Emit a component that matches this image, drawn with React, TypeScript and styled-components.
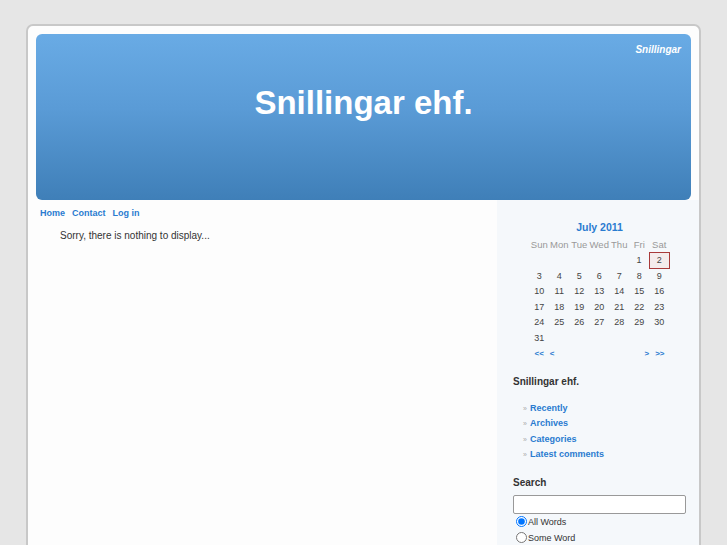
import * as React from 'react'
import styled, { createGlobalStyle } from 'styled-components'

const GlobalStyle = createGlobalStyle`
  html, body {
    margin: 0;
    background: #e6e6e6;
    font-family: 'Liberation Sans', Arial, sans-serif;
  }
`

const Page = styled.div`
  padding-top: 24px;
  height: 521px;
  overflow: hidden;
`

const Container = styled.div`
  width: 671px;
  margin: 0 auto;
  border: 2px solid #c8c8c8;
  border-radius: 7px;
  background: #fdfdfd;
  padding-top: 8px;
  min-height: 600px;
  box-sizing: content-box;
`

const Header = styled.header`
  position: relative;
  margin: 0 8px;
  height: 166px;
  border-radius: 6px;
  background: linear-gradient(to bottom, #69abe5 0%, #5a9bd6 45%, #3f7fb8 100%);
  display: flex;
  align-items: flex-start;
  justify-content: center;
  box-sizing: border-box;
  padding-top: 50px;
`

const Title = styled.h1`
  margin: 0;
  color: #fff;
  font-size: 33px;
  line-height: 38px;
  font-weight: bold;
`

const Tagline = styled.div`
  position: absolute;
  top: 10px;
  right: 10px;
  color: #fff;
  font-size: 10px;
  font-weight: bold;
  font-style: italic;
`

const Body = styled.div`
  display: flex;
`

const Main = styled.main`
  flex: 1;
  padding: 8px 12px 0;
`

const Nav = styled.nav`
  display: flex;
  gap: 7px;
  font-size: 9px;
  font-weight: bold;
  line-height: 11px;
`

const Link = styled.a`
  color: #2a7bd0;
  text-decoration: none;
`

const Message = styled.p`
  margin: 11px 0 0 20px;
  font-size: 10px;
  color: #333;
`

const Sidebar = styled.aside`
  width: 202px;
  box-sizing: border-box;
  min-height: 400px;
  background: #f5f8fb;
  padding: 21px 13px 0 16px;
`

const Calendar = styled.table`
  margin: 0 auto;
  border-collapse: collapse;
  font-size: 9px;
  color: #444;
`

const Caption = styled.caption`
  font-size: 10.5px;
  font-weight: bold;
  color: #2a7bd0;
  padding-bottom: 3px;
`

const DayHead = styled.th`
  width: 20px;
  height: 16px;
  padding: 0;
  font-size: 9.5px;
  font-weight: normal;
  color: #999;
  text-align: center;
`

const Day = styled.td<{ $today?: boolean }>`
  width: 20px;
  height: 15.5px;
  padding: 0;
  text-align: center;
  box-sizing: border-box;
  ${(p) => p.$today && `border: 1px solid #a83a3a; background: #f4ecec;`}
`

const CalNav = styled.div`
  display: flex;
  justify-content: space-between;
  width: 130px;
  margin: 3px auto 0;
  font-size: 8px;
  font-weight: bold;
`

const NavGroup = styled.span`
  display: flex;
  gap: 6px;
`

const SectionTitle = styled.h3<{ $gap: number }>`
  margin: ${(p) => p.$gap}px 0 0;
  font-size: 10px;
  font-weight: bold;
  color: #333;
`

const List = styled.ul`
  list-style: none;
  margin: 14px 0 0;
  padding: 0 0 0 10px;
`

const Item = styled.li`
  font-size: 9px;
  font-weight: bold;
  line-height: 15.5px;
  &::before {
    content: '»';
    color: #aaa;
    font-size: 7px;
    font-weight: normal;
    margin-right: 3px;
  }
`

const SearchBox = styled.input`
  display: block;
  width: 173px;
  height: 19px;
  margin-top: 7px;
  box-sizing: border-box;
  border: 1px solid #999;
  border-radius: 2px;
  background: #fff;
`

const RadioRow = styled.label`
  display: flex;
  align-items: center;
  gap: 1px;
  height: 16px;
  font-size: 9px;
  color: #333;
  input {
    margin: 0 0 0 3px;
    width: 11px;
    height: 11px;
  }
`

const weeks: (number | null)[][] = [
  [null, null, null, null, null, 1, 2],
  [3, 4, 5, 6, 7, 8, 9],
  [10, 11, 12, 13, 14, 15, 16],
  [17, 18, 19, 20, 21, 22, 23],
  [24, 25, 26, 27, 28, 29, 30],
  [31, null, null, null, null, null, null],
]

const days = ['Sun', 'Mon', 'Tue', 'Wed', 'Thu', 'Fri', 'Sat']

const App = () => {
  return (
    <Page>
      <GlobalStyle />
      <Container>
        <Header>
          <Tagline>Snillingar</Tagline>
          <Title>Snillingar ehf.</Title>
        </Header>
        <Body>
          <Main>
            <Nav>
              <Link href="#">Home</Link>
              <Link href="#">Contact</Link>
              <Link href="#">Log in</Link>
            </Nav>
            <Message>Sorry, there is nothing to display...</Message>
          </Main>
          <Sidebar>
            <Calendar>
              <Caption>July 2011</Caption>
              <thead>
                <tr>
                  {days.map((d) => (
                    <DayHead key={d}>{d}</DayHead>
                  ))}
                </tr>
              </thead>
              <tbody>
                {weeks.map((w, i) => (
                  <tr key={i}>
                    {w.map((d, j) => (
                      <Day key={j} $today={d === 2}>
                        {d ?? ''}
                      </Day>
                    ))}
                  </tr>
                ))}
              </tbody>
            </Calendar>
            <CalNav>
              <NavGroup>
                <Link href="#">&lt;&lt;</Link>
                <Link href="#">&lt;</Link>
              </NavGroup>
              <NavGroup>
                <Link href="#">&gt;</Link>
                <Link href="#">&gt;&gt;</Link>
              </NavGroup>
            </CalNav>
            <SectionTitle $gap={18}>Snillingar ehf.</SectionTitle>
            <List>
              <Item><Link href="#">Recently</Link></Item>
              <Item><Link href="#">Archives</Link></Item>
              <Item><Link href="#">Categories</Link></Item>
              <Item><Link href="#">Latest comments</Link></Item>
            </List>
            <SectionTitle $gap={14}>Search</SectionTitle>
            <SearchBox type="text" />
            <RadioRow>
              <input type="radio" name="mode" defaultChecked />
              All Words
            </RadioRow>
            <RadioRow>
              <input type="radio" name="mode" />
              Some Word
            </RadioRow>
          </Sidebar>
        </Body>
      </Container>
    </Page>
  )
}

export default App
